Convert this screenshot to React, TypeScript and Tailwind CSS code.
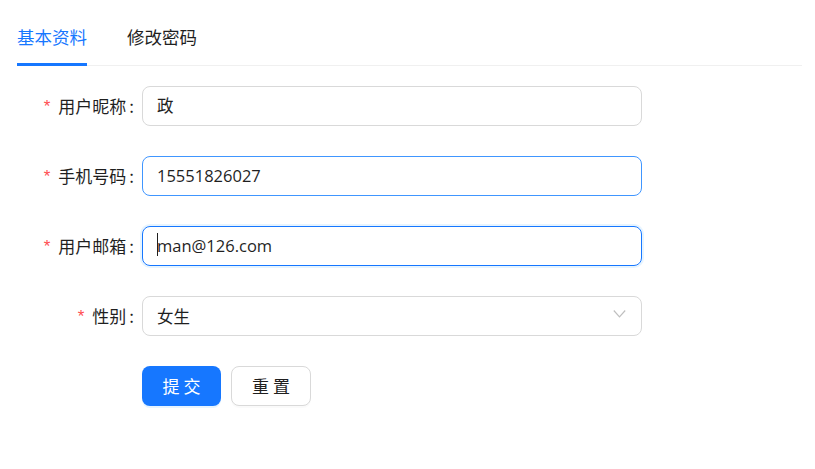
import React from "react";

const CJK = { fontFamily: '"Noto Sans CJK SC", "Noto Sans", sans-serif' };
const LATIN = { fontFamily: '"Open Sans", "Noto Sans CJK SC", sans-serif' };

function Label({ text }: { text: string }) {
  return (
    <div className="w-[125px] shrink-0 flex justify-end items-center pr-[8px] text-[17px] leading-[24px] text-[#1f1f1f]" style={CJK}>
      <span className="text-[#ff4d4f] text-[17px] mr-[8px] mt-[2px]" style={{ fontFamily: '"Liberation Sans", sans-serif' }}>*</span>
      <span>{text}</span>
      <span className="ml-[3px]">:</span>
    </div>
  );
}

export default function App() {
  return (
    <div className="w-[815px] h-[469px] bg-white pl-[17px] pr-[13px]" style={CJK}>
      <div className="relative flex gap-[40px] h-[66px] border-b border-[#f0f0f0]">
        <div className="relative h-full pt-[25px] text-[17.5px] leading-[24px] text-[#1677ff]">
          基本资料
          <div className="absolute left-0 right-0 bottom-[-1px] h-[3px] bg-[#1677ff]" />
        </div>
        <div className="relative h-full pt-[25px] text-[17.5px] leading-[24px] text-[#1f1f1f]">修改密码</div>
      </div>

      <div className="mt-[20px] flex flex-col gap-[30px]">
        <div className="flex items-center h-[40px]">
          <Label text="用户昵称" />
          <div className="w-[500px] h-[40px] border border-[#d9d9d9] rounded-[8px] pl-[14px] flex items-center text-[16.5px] text-[#1f1f1f]" style={LATIN}>
            政
          </div>
        </div>
        <div className="flex items-center h-[40px]">
          <Label text="手机号码" />
          <div className="w-[500px] h-[40px] border border-[#4096ff] rounded-[8px] pl-[14px] flex items-center text-[16.5px] text-[#1f1f1f]" style={LATIN}>
            15551826027
          </div>
        </div>
        <div className="flex items-center h-[40px]">
          <Label text="用户邮箱" />
          <div className="relative w-[500px] h-[40px] border border-[#1677ff] rounded-[8px] pl-[14px] flex items-center text-[16.5px] text-[#1f1f1f] shadow-[0_0_0_2px_rgba(5,145,255,0.1)]" style={LATIN}>
            <span className="absolute left-[14px] top-[6px] w-[1px] h-[23px] bg-[#1f1f1f]" />
            man@126.com
          </div>
        </div>
        <div className="flex items-center h-[40px]">
          <Label text="性别" />
          <div className="relative w-[500px] h-[40px] border border-[#d9d9d9] rounded-[8px] pl-[14px] flex items-center text-[16.5px] text-[#1f1f1f]" style={CJK}>
            女生
            <svg className="absolute right-[15px] top-[12px]" width="13" height="10" viewBox="0 0 13 10" fill="none">
              <polyline points="0.8,1.5 6.5,7.8 12.2,1.5" stroke="#bfbfbf" strokeWidth="1.2" />
            </svg>
          </div>
        </div>
        <div className="flex items-center h-[40px] pl-[125px] gap-[10px]">
          <div className="w-[79px] h-[40px] rounded-[8px] bg-[#1677ff] text-white flex items-center justify-center text-[17px] shadow-[0_2px_0_rgba(5,145,255,0.1)]" style={CJK}>
            提&nbsp;交
          </div>
          <div className="w-[80px] h-[40px] rounded-[8px] bg-white border border-[#d9d9d9] text-[#1f1f1f] flex items-center justify-center text-[17px] shadow-[0_2px_0_rgba(0,0,0,0.02)]" style={CJK}>
            重&nbsp;置
          </div>
        </div>
      </div>
    </div>
  );
}
